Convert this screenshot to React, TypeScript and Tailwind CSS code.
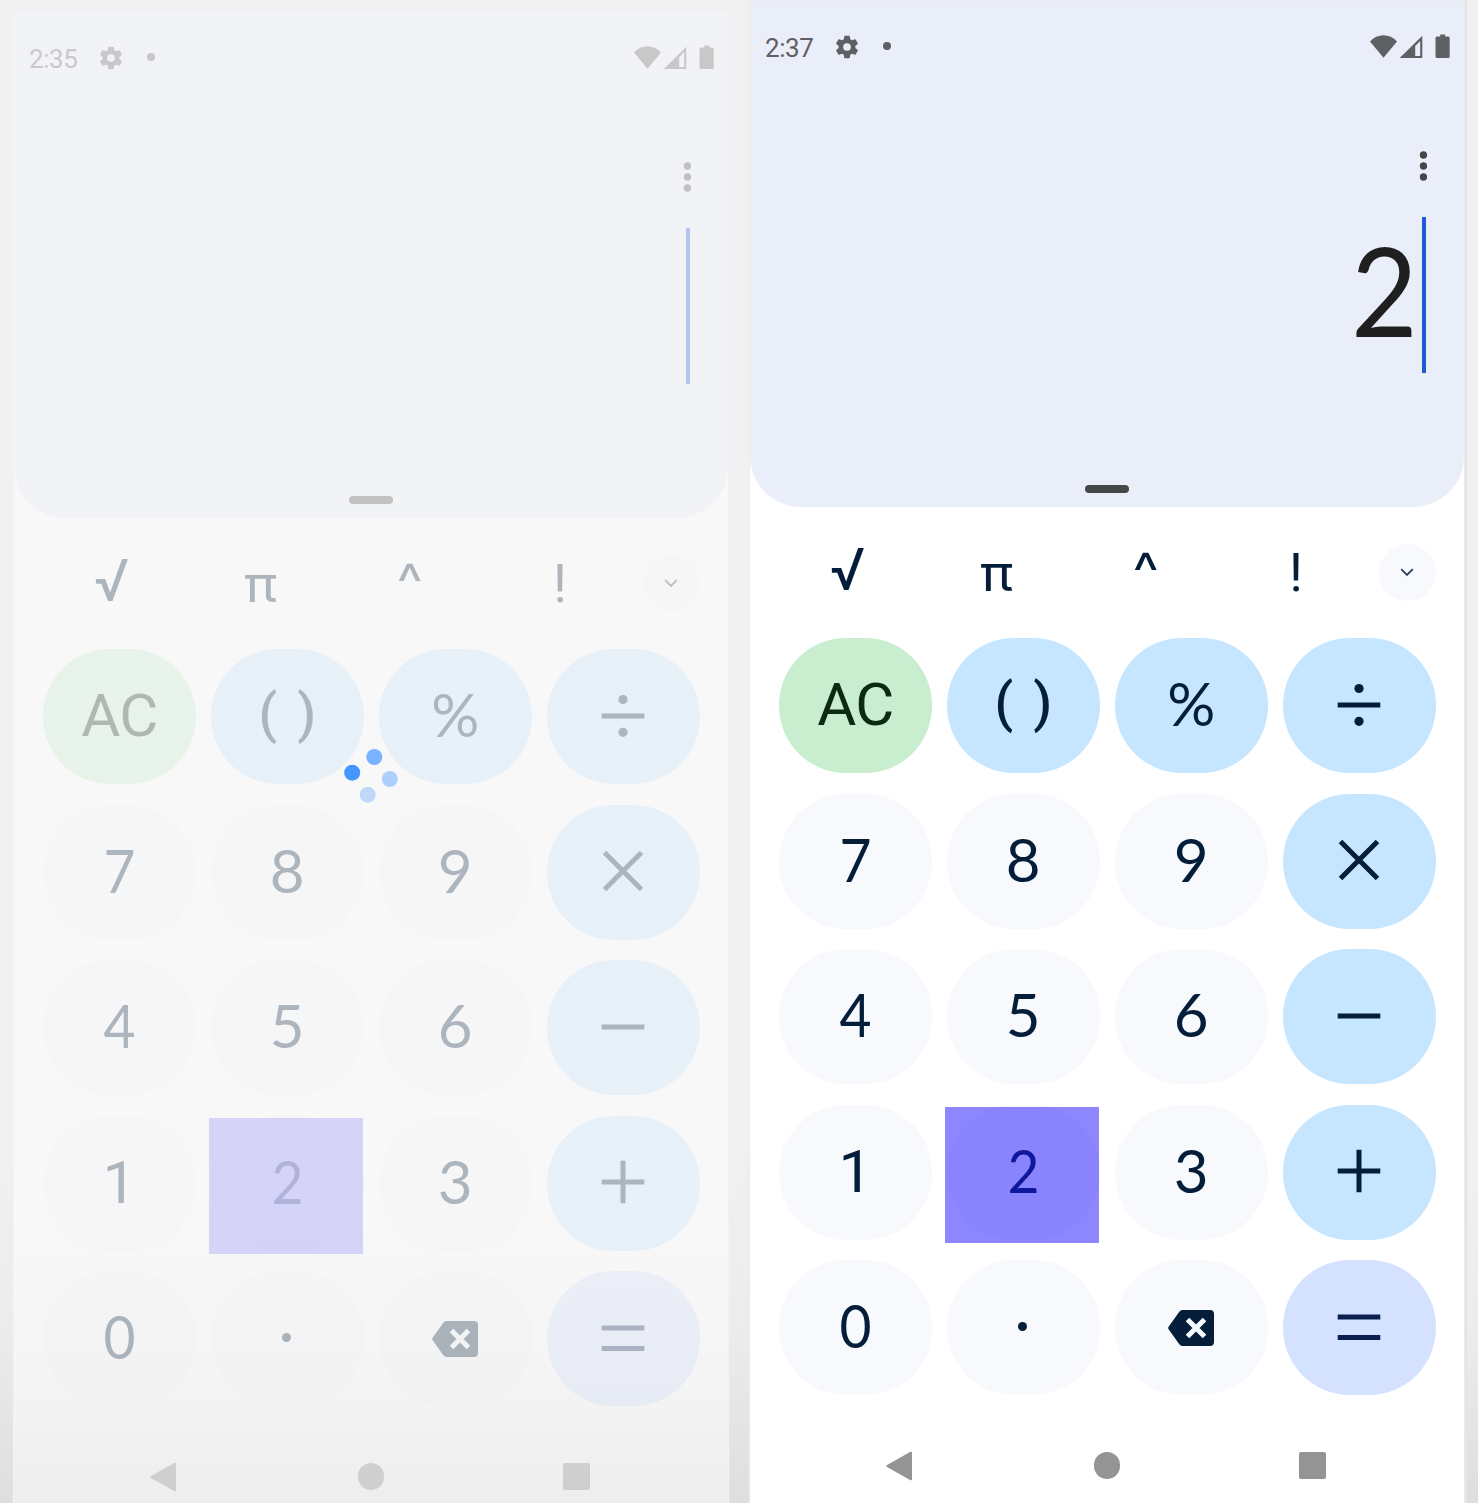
import React from "react";

type Tone = "digit" | "op" | "clear" | "equals";
type Key = { id: string; tone: Tone; node: React.ReactNode; highlighted?: boolean };

const tones: Record<Tone, string> = {
  digit: "bg-[#f8f9fd] text-[#041e3a]",
  op: "bg-[#c6e6ff] text-[#041e3a]",
  clear: "bg-[#c8edcf] text-[#0c2911]",
  equals: "bg-[#d5e2ff] text-[#0a1e50]",
};

function Lines({ d, dots = false }: { d: string; dots?: boolean }) {
  return (
    <svg width="44" height="44" viewBox="0 0 44 44" className="-mt-[2px] -ml-[0.5px]">
      <path d={d} stroke="currentColor" strokeWidth="5" fill="none" />
      {dots && (
        <>
          <circle cx="22" cy="5.5" r="4.6" fill="currentColor" />
          <circle cx="22" cy="38.3" r="4.6" fill="currentColor" />
        </>
      )}
    </svg>
  );
}

function Backspace() {
  return (
    <svg width="46" height="36" viewBox="0 0 46 36">
      <path
        d="M14.5 0H42a4 4 0 0 1 4 4v28a4 4 0 0 1-4 4H14.5a4 4 0 0 1-3.2-1.7L.6 19.2a2 2 0 0 1 0-2.4L11.3 1.7A4 4 0 0 1 14.5 0z"
        fill="currentColor"
      />
      <path d="M19.5 9.5l17 17M36.500 9.500l-17 17" stroke="#f8f9fd" strokeWidth="5" />
    </svg>
  );
}

const wide = (t: string) => <span className="font-['Lato',sans-serif] text-[60px] -mt-[5px]">{t}</span>;
const narrow = (t: string) => (
  <span className="font-['Lato',sans-serif] text-[60px] -mt-[5px] scale-x-[0.92]">{t}</span>
);

const keys: Key[] = [
  { id: "ac", tone: "clear", node: <span className="tracking-[-1px] -mt-px">AC</span> },
  {
    id: "paren",
    tone: "op",
    node: (
      <span className="flex gap-[20px] text-[54px] font-medium -mt-[6px]">
        <span>(</span>
        <span>)</span>
      </span>
    ),
  },
  { id: "pct", tone: "op", node: wide("%") },
  { id: "div", tone: "op", node: <Lines d="M.7 22h42.600" dots /> },
  { id: "7", tone: "digit", node: narrow("7") },
  { id: "8", tone: "digit", node: wide("8") },
  { id: "9", tone: "digit", node: wide("9") },
  { id: "mul", tone: "op", node: <Lines d="M3.500 3.500l37 37M40.500 3.500l-37 37" /> },
  { id: "4", tone: "digit", node: narrow("4") },
  { id: "5", tone: "digit", node: wide("5") },
  { id: "6", tone: "digit", node: wide("6") },
  { id: "sub", tone: "op", node: <Lines d="M.7 22h42.600" /> },
  { id: "1", tone: "digit", node: <span>1</span> },
  { id: "2", tone: "digit", node: narrow("2"), highlighted: true },
  { id: "3", tone: "digit", node: wide("3") },
  { id: "add", tone: "op", node: <Lines d="M.7 22h42.600M22 .7v42.600" /> },
  { id: "0", tone: "digit", node: narrow("0") },
  { id: "dot", tone: "digit", node: <span className="size-[9px] -mt-[2px] -ml-px rounded-full bg-current" /> },
  { id: "back", tone: "digit", node: <Backspace /> },
  { id: "eq", tone: "equals", node: <Lines d="M.7 12h42.600M.7 32.500h42.600" /> },
];

function Gear() {
  return (
    <svg width="28" height="28" viewBox="0 0 24 24" fill="currentColor" className="ml-[0.5px] mt-px">
      <path d="M19.140 12.940c.04-.3.060-.610.060-.940 0-.320-.020-.640-.070-.940l2.030-1.580c.180-.140.230-.410.120-.610l-1.920-3.320c-.120-.220-.370-.290-.590-.220l-2.390.960c-.500-.380-1.030-.700-1.620-.940l-.360-2.540c-.040-.240-.240-.410-.480-.410h-3.840c-.240 0-.430.170-.470.410l-.360 2.540c-.590.240-1.130.570-1.620.940l-2.390-.960c-.220-.080-.470 0-.590.220L2.740 8.870c-.120.210-.080.470.120.610l2.030 1.580c-.050.300-.090.630-.090.940s.020.640.070.940l-2.030 1.580c-.180.140-.230.410-.120.610l1.920 3.320c.120.220.370.290.590.220l2.390-.960c.500.380 1.030.700 1.620.940l.360 2.540c.050.240.240.410.480.410h3.840c.240 0 .440-.170.470-.410l.360-2.540c.590-.240 1.130-.560 1.620-.940l2.390.960c.220.080.470 0 .590-.220l1.920-3.320c.120-.220.070-.470-.120-.610l-2.010-1.580z" />
      <circle cx="12" cy="12" r="3.300" fill="#eaeef9" />
    </svg>
  );
}

function StatusIcons() {
  return (
    <svg width="80" height="25" viewBox="0 0 80 25" fill="currentColor">
      <path d="M13.500 23.700L0 7.500C3.700 3.200 8.500 1.200 13.500 1.200s9.800 2 13.500 6.300z" />
      <path fillRule="evenodd" d="M52.300 1.700v22.200H29.700zM50.200 7l-5 5v10h5z" />
      <path d="M70.200.4h5v2.200h3a1.500 1.500 0 0 1 1.500 1.500v18.300a1.500 1.500 0 0 1-1.500 1.500H67a1.500 1.500 0 0 1-1.500-1.500V4.100A1.500 1.500 0 0 1 67 2.600h3.200z" />
    </svg>
  );
}

function Phone({ time, value }: { time: string; value: string }) {
  return (
    <div className="w-[714px] h-[1540px] bg-white flex flex-col">
      <header className="h-[506px] shrink-0 rounded-b-[51px] bg-[#eaeef9] flex flex-col">
        <div className="mt-[31px] h-7 flex items-center pl-[15px] pr-[14px] text-[#5f6063]">
          <span className="w-[67px] mt-[3px] text-[26px] leading-none tracking-[-0.400px]">{time}</span>
          <Gear />
          <span className="ml-[22.500px] size-2 rounded-full bg-current" />
          <span className="ml-auto flex">
            <StatusIcons />
          </span>
        </div>
        <svg width="8" height="30" viewBox="0 0 8 30" fill="#444746" className="mt-[91px] mr-[37px] self-end">
          <circle cx="4.500" cy="4" r="3.700" />
          <circle cx="4.500" cy="15" r="3.700" />
          <circle cx="4.500" cy="26" r="3.700" />
        </svg>
        <div className="mt-[36px] h-[156px] pr-[38px] flex justify-end items-center">
          <span className="font-['Lato',sans-serif] text-[125px] leading-none text-[#1f1f1f] mr-[2px] -mt-[11px] scale-x-[0.92]">
            {value}
          </span>
          <span className="w-[4px] h-full bg-[#2058d8]" />
        </div>
        <div className="mt-auto mb-[14.500px] self-center w-11 h-[7.500px] rounded-full bg-[#464847]" />
      </header>

      <div className="h-[131px] shrink-0 pl-[22px] pr-[28.500px] flex items-center text-[#041e3a] leading-none font-['Inter',sans-serif]">
        <div className="w-[149.500px] pl-[2px] text-center text-[57px] -mt-[7px]">√</div>
        <div className="w-[149.500px] text-center text-[50px] scale-x-110">π</div>
        <div className="w-[149.500px] text-center text-[56px] -mt-[2px]">^</div>
        <div className="w-[151px] text-center text-[54px] font-['Roboto',sans-serif]">!</div>
        <div className="ml-auto size-[57px] rounded-full bg-[#f8f9fd] flex items-center justify-center">
          <svg width="14" height="9" viewBox="0 0 14 9">
            <path d="M1.200 1.200L7 7l5.800-5.800" fill="none" stroke="#27405c" strokeWidth="1.800" />
          </svg>
        </div>
      </div>

      <div className="pl-[28.500px] grid grid-cols-[repeat(4,153.500px)] gap-x-[14.500px] gap-y-[20.500px]">
        {keys.map((k) => (
          <div
            key={k.id}
            className={`relative h-[135px] rounded-[67px] flex items-center justify-center text-[60px] leading-none ${tones[k.tone]}`}
          >
            {k.node}
            {k.highlighted && (
              <div className="absolute -left-[1.500px] top-[2.500px] w-[154px] h-[136px] bg-[#190fff]/50" />
            )}
          </div>
        ))}
      </div>

      <nav className="mt-[55.500px] pl-[136px] pr-[138px] h-[30px] flex items-center justify-between text-[#949494]">
        <svg width="27" height="30" viewBox="0 0 27 30">
          <path d="M24.500.8L1 14a1.200 1.200 0 0 0 0 2l23.500 13.200a1 1 0 0 0 1.500-.9V1.700a1 1 0 0 0-1.500-.9z" fill="currentColor" />
        </svg>
        <span className="ml-[2px] size-[26.500px] rounded-full bg-current" />
        <span className="size-[27px] rounded-[2px] bg-current" />
      </nav>
    </div>
  );
}

function Spinner() {
  return (
    <svg width="56" height="56" viewBox="0 0 56 56" className="absolute left-[329px] top-[736px]">
      <circle cx="9.200" cy="24.700" r="8" fill="#4596ff" />
      <circle cx="31.300" cy="9" r="8" fill="#7ab3ff" />
      <circle cx="46.800" cy="31" r="8" fill="#adcffc" />
      <circle cx="24.700" cy="46.700" r="8" fill="#c0d9fb" />
    </svg>
  );
}

export default function App() {
  return (
    <div className="w-[1478px] h-[1503px] overflow-hidden flex items-start pl-[14px] font-['Roboto',sans-serif] bg-[linear-gradient(to_bottom,#f1f1f1_0px,#f1f1f1_1130px,#ececec_1330px,#dedede_1503px)]">
      <div className="relative mt-3 shadow-[0_0_1px_1px_#f2f2f2]">
        <Phone time="2:35" value="" />
        <div className="absolute inset-0 bg-[linear-gradient(to_bottom,#f5f5f5_0px,#f5f5f5_1200px,#f0f0f0_1370px,#e6e6e6_1491px)] opacity-70" />
        <Spinner />
      </div>
      <div className="ml-[22px] mt-px shadow-[0_0_1px_1px_#ebebeb,2px_0_1px_1px_#e4e4e4]">
        <Phone time="2:37" value="2" />
      </div>
    </div>
  );
}
